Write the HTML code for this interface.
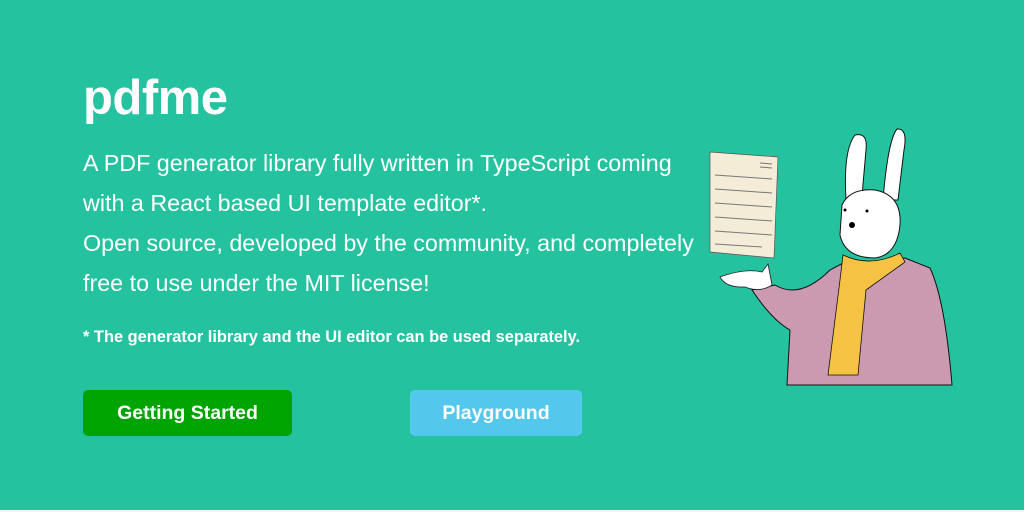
<!DOCTYPE html>
<html><head><style>
html,body{margin:0;padding:0;width:1024px;height:512px;overflow:hidden;background:#25c2a0;font-family:"Liberation Sans",sans-serif;color:#fff}
.bot{position:absolute;left:0;top:510px;width:1024px;height:2px;background:#f4f4f4}
h1{position:absolute;left:83px;top:70px;margin:0;font-size:49px;font-weight:bold;letter-spacing:-0.5px}
.p{position:absolute;left:83px;top:143px;font-size:23.3px;line-height:40px;white-space:nowrap}
.n{position:absolute;left:83px;top:328px;font-size:16.4px;font-weight:bold}
.b{position:absolute;top:390px;height:46px;border-radius:5px;font-weight:bold;font-size:19.5px;line-height:46px;text-align:center}
</style></head><body>
<h1>pdfme</h1>
<div class="p">A PDF generator library fully written in TypeScript coming<br>with a React based UI template editor*.<br>Open source, developed by the community, and completely<br>free to use under the MIT license!</div>
<div class="n">* The generator library and the UI editor can be used separately.</div>
<div class="b" style="left:83px;width:209px;background:#00a400">Getting Started</div>
<div class="b" style="left:410px;width:172px;background:#54c7ec">Playground</div>
<svg style="position:absolute;left:0;top:0" width="1024" height="512">
<polygon points="710,152 778,157 774,258 710,252" fill="#f4ecd6" stroke="#555" stroke-width="0.7"/>
<g stroke="#777" stroke-width="1">
<line x1="715" y1="175" x2="772" y2="179"/><line x1="715" y1="189" x2="772" y2="193"/><line x1="715" y1="203" x2="772" y2="207"/><line x1="715" y1="217" x2="772" y2="221"/><line x1="715" y1="231" x2="772" y2="235"/><line x1="715" y1="244" x2="762" y2="247"/>
<line x1="760" y1="163" x2="772" y2="164"/><line x1="760" y1="167" x2="772" y2="168"/></g>
<path d="M845,262 Q870,262 905,258 L930,268 Q945,300 952,385 L787,385 L790,330 Q772,320 752,290 L775,285 Q800,300 830,270 Z" fill="#cc9ab0" stroke="#111" stroke-width="1"/>
<path d="M720,277 Q745,268 762,272 L768,264 L772,285 Q760,293 745,287 Q726,288 720,277Z" fill="#fff" stroke="#222" stroke-width="0.8"/>
<path d="M843,255 Q870,268 900,253 L905,262 Q880,280 866,290 L858,375 L828,375 L840,280 Z" fill="#f6c244" stroke="#111" stroke-width="0.8"/>
<path d="M846,200 Q843,150 855,135 Q868,132 866,150 L862,196Z M883,200 Q888,140 897,129 Q908,128 904,150 L898,200Z" fill="#fff" stroke="#111" stroke-width="1"/>
<path d="M842,205 Q850,188 875,190 Q902,195 900,225 Q897,255 875,258 Q845,258 840,235 Z" fill="#fff" stroke="#111" stroke-width="1"/>
<circle cx="852" cy="225" r="3" fill="#000"/><circle cx="845" cy="210" r="1.5" fill="#000"/><circle cx="867" cy="211" r="1.5" fill="#000"/>
</svg>
<div class="bot"></div>
</body></html>
